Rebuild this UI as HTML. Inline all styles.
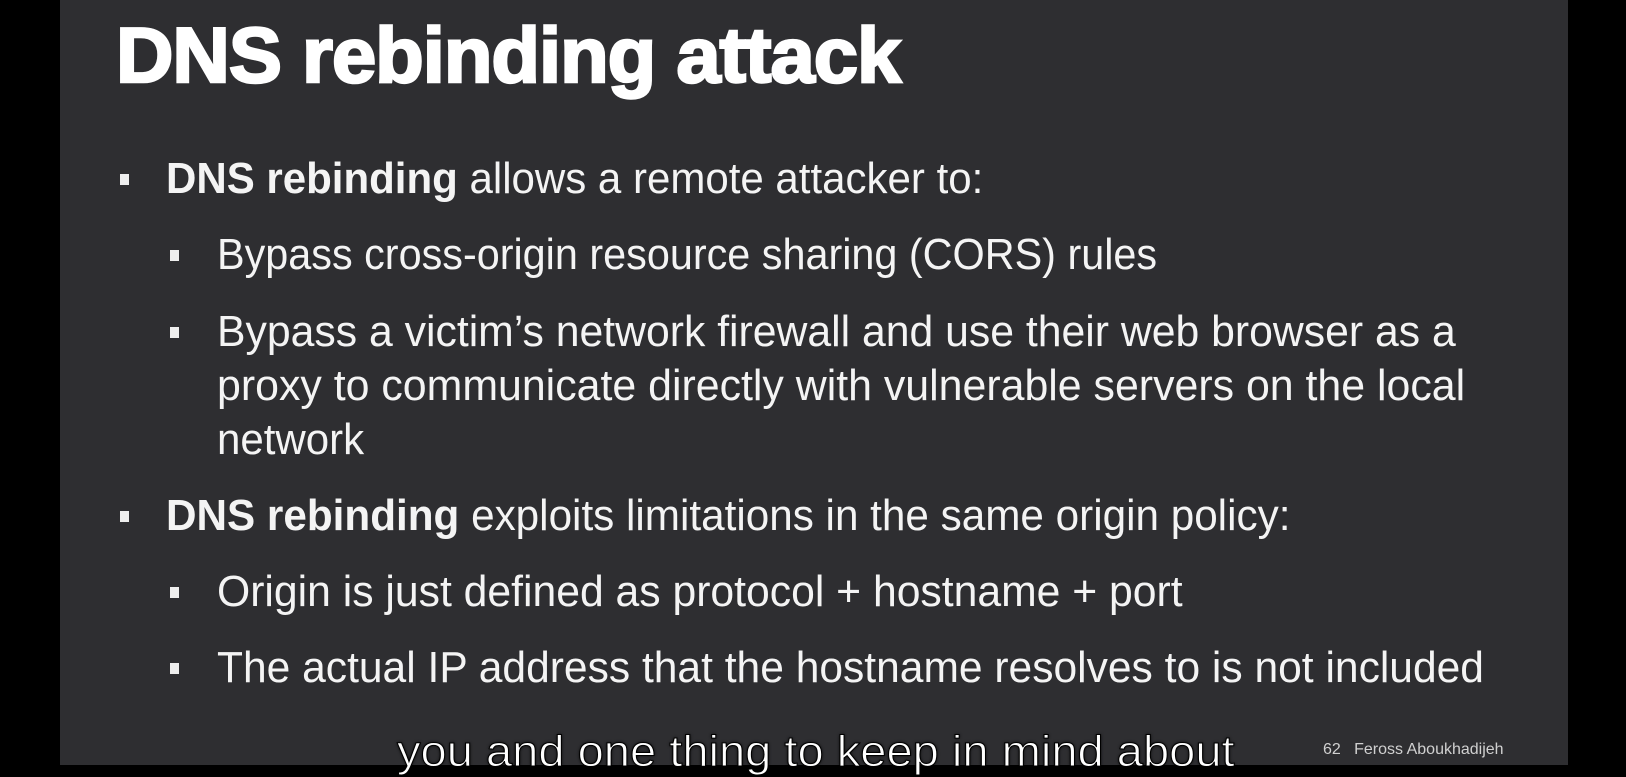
<!DOCTYPE html>
<html><head><style>
html,body{margin:0;padding:0;background:#000;width:1626px;height:765px;overflow:hidden}
.slide{position:absolute;left:60px;top:0;width:1508px;height:765px;background:#2e2e31}
.t{position:absolute;font-family:"Liberation Sans",sans-serif;color:#f4f4f4;white-space:nowrap;transform-origin:0 100%;line-height:1}
.title{font-weight:bold;font-size:78px;left:116px;top:16px;transform:scaleX(1.02);letter-spacing:-1px;color:#fff;-webkit-text-stroke:2.5px #fff}
.l{font-size:44px;transform:scaleX(0.955)}
.b{position:absolute;width:9px;height:11px;background:#eee}
.sub{position:absolute;left:397px;top:727px;font-family:"Liberation Sans",sans-serif;font-size:44px;color:#fff;white-space:nowrap;transform:scaleX(1.07);transform-origin:0 0;-webkit-text-stroke:1px #000;text-shadow:0 0 3px #000}
.foot{position:absolute;left:1323px;top:741px;font-family:"Liberation Sans",sans-serif;font-size:16px;color:#d0d0d0;white-space:nowrap}
</style></head><body>
<div class="slide"></div>
<div class="t title">DNS rebinding attack</div>

<div class="b" style="left:120px;top:174px"></div>
<div class="t l" style="left:166px;top:157px"><b>DNS rebinding</b> allows a remote attacker to:</div>

<div class="b" style="left:170px;top:250px"></div>
<div class="t l" style="left:217px;top:233px;transform:scaleX(0.94)">Bypass cross-origin resource sharing (CORS) rules</div>

<div class="b" style="left:170px;top:327px"></div>
<div class="t l" style="left:217px;top:310px;transform:scaleX(0.971)">Bypass a victim’s network firewall and use their web browser as a</div>
<div class="t l" style="left:217px;top:364px;transform:scaleX(0.974)">proxy to communicate directly with vulnerable servers on the local</div>
<div class="t l" style="left:217px;top:418px">network</div>

<div class="b" style="left:120px;top:511px"></div>
<div class="t l" style="left:166px;top:494px;transform:scaleX(0.96)"><b>DNS rebinding</b> exploits limitations in the same origin policy:</div>

<div class="b" style="left:170px;top:587px"></div>
<div class="t l" style="left:217px;top:570px;transform:scaleX(0.97)">Origin is just defined as protocol + hostname + port</div>

<div class="b" style="left:170px;top:663px"></div>
<div class="t l" style="left:217px;top:646px;transform:scaleX(0.967)">The actual IP address that the hostname resolves to is not included</div>

<div class="sub">you and one thing to keep in mind about</div>
<div class="foot">62&nbsp;&nbsp;&nbsp;Feross Aboukhadijeh</div>
</body></html>
